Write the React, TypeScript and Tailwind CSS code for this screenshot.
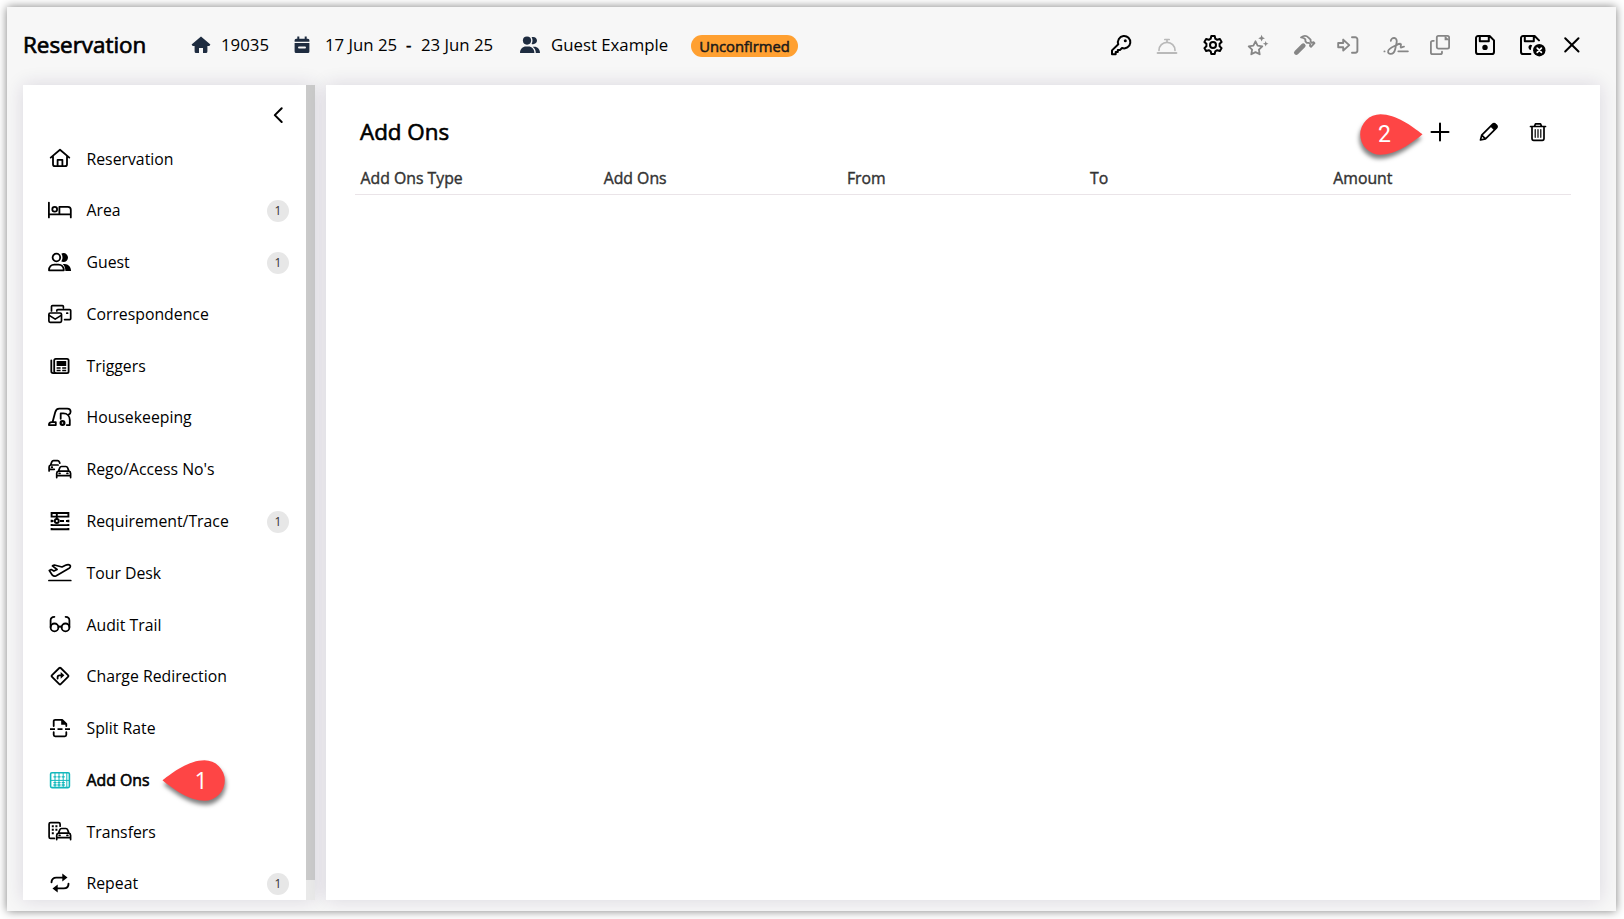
import type { ReactNode } from 'react'

interface IconProps {
  children: ReactNode
  className?: string
  w?: number
  sw?: number
}

function Icon({ children, className = '', w = 24, sw = 1.8 }: IconProps) {
  return (
    <svg
      width={w}
      height={24}
      viewBox={`0 0 ${w} 24`}
      fill="none"
      stroke="currentColor"
      strokeWidth={sw}
      strokeLinecap="round"
      strokeLinejoin="round"
      className={`shrink-0 ${className}`}
    >
      {children}
    </svg>
  )
}

const solid = { fill: 'currentColor', stroke: 'none' }

// Front view of a car, shared by the Rego and Transfers icons
const car = (
  <>
    <path d="M8.7 20.6v-4.2c0-1.2.7-2 1.8-2.3l1.3-3.4c.3-.8.9-1.2 1.7-1.2h4.4c.8 0 1.4.4 1.7 1.2l1.3 3.4c1.1.3 1.7 1.1 1.7 2.3v4.2M8.7 18.7h13.9M10.5 14.1h10.4" />
    <path d="M11.2 16.4h.8M19 16.4h.8" />
  </>
)

interface NavItem {
  label: string
  icon: ReactNode
  count?: number
  active?: boolean
}

const navItems: NavItem[] = [
  {
    label: 'Reservation',
    icon: (
      <Icon>
        <path d="M2.7 11.6 12 3.8l9.3 7.8M5 10v8.2a2 2 0 0 0 2 2h10a2 2 0 0 0 2-2V10" />
        <path d="M9.6 20v-6.2h4.8V20" />
      </Icon>
    ),
  },
  {
    label: 'Area',
    count: 1,
    icon: (
      <Icon>
        <path d="M.9 4.6v14.8M.9 16.4h21.9M22.8 19.4v-7.6a3 3 0 0 0-3-3h-8.4v7.6" />
        <circle cx="6.7" cy="11.2" r="2.4" />
      </Icon>
    ),
  },
  {
    label: 'Guest',
    count: 1,
    icon: (
      <Icon>
        <circle cx="8.4" cy="7.5" r="3.8" />
        <path d="M1 20.3c0-3.4 2.3-5.6 5.3-5.6h4.2c3 0 5.3 2.2 5.3 5.6z" />
        <path {...solid} d="M13.2 11.3c.9-1 1.3-2.3 1.3-3.8 0-1.4-.4-2.7-1.2-3.7.7-.5 1.5-.7 2.2-.7a4.500 4.500 0 0 1 0 9c-.9 0-1.700-.3-2.300-.8zM14.600 13.900h2.100c3.600 0 6.400 2.900 6.400 7.200h-5.700c0-3.300-.9-5.700-2.800-7.200z" />
      </Icon>
    ),
  },
  {
    label: 'Correspondence',
    icon: (
      <Icon sw={1.7}>
        <path d="M3.5 8.9V4.6c0-.6.4-1 1-1h9.9c.6 0 1 .4 1 1v1.2M8.800 8.900v-.3c0-.6.4-1 1-1h11.900c.6 0 1 .4 1 1v8c0 .6-.4 1-1 1h-5.100" />
        <rect x=".9" y="11" width="12.6" height="9.4" rx="1.3" />
        <path d="m1.2 13.4 6 3.7 6-3.7M18.800 11.200h.8" />
      </Icon>
    ),
  },
  {
    label: 'Triggers',
    icon: (
      <Icon>
        <rect x="6.2" y="4.9" width="14.4" height="14.2" rx="1.6" />
        <path d="M3.3 6.300v11c0 1.100.7 1.800 1.800 1.800h2.500" />
        <rect {...solid} x="8.6" y="7" width="9.6" height="5" />
        <path strokeWidth={1.5} strokeLinecap="butt" d="M8.600 13.900h4M14.200 13.900h4M8.600 16.500h4M14.200 16.500h4" />
      </Icon>
    ),
  },
  {
    label: 'Housekeeping',
    icon: (
      <Icon>
        <path d="M.9 20.100c0-1.700 1.200-2.900 2.900-2.900h4v2.900zM4.600 17l2.600-9.800c.6-2.300 1.700-3.600 4-3.600h8.100c2 0 3.300 1.300 3.300 3.100 0 1.400-.7 2.300-1.900 2.900" />
        <path d="M12.700 13.800V8.300h2.700c3.800 0 6.400 2.900 6.400 6.800v5h-3" />
        <circle cx="14.5" cy="18" r="1.9" strokeWidth={2.2} />
      </Icon>
    ),
  },
  {
    label: "Rego/Access No's",
    icon: (
      <Icon sw={1.7}>
        {car}
        <path d="M1.100 14v-3.900c0-1.100.5-1.800 1.500-2.100l1.200-3.100c.3-.8.9-1.200 1.700-1.200h4.100c.8 0 1.400.4 1.700 1.100l.5 1.300M2.600 8h7.500M1.100 12.300h5.200M3.600 10.200h.7" />
      </Icon>
    ),
  },
  {
    label: 'Requirement/Trace',
    count: 1,
    icon: (
      <Icon sw={1.9}>
        <g strokeLinecap="butt">
          <path d="M2.800 4h18.400M2.800 7.600h18.400M3.600 3v5.500M20.400 3v5.500" />
          <path d="M2.800 12h2.700M12 12h4M18 12h3.200M3.600 10.800v2.400M20.400 10.800v2.400M2.800 16.100h18.400M2.800 20.200h18.400M3.600 15v2M20.400 15v2M3.600 19v2.200M20.400 19v2.200" />
        </g>
        <circle cx="8.8" cy="12" r="2" />
        <path d="M8.800 5v5" />
      </Icon>
    ),
  },
  {
    label: 'Tour Desk',
    icon: (
      <Icon sw={1.7}>
        <path d="M.9 19.500h21.900" />
        <path d="m1.300 9.500 1.900-.9 2.700 1.500 3.200-1.600-4.700-3.600 2-.9 7.600 2 3.500-1.700c1.400-.7 3.500-1 4.600.1 1 1.100-.3 2.500-1.800 3.300L8.300 14.700c-1.400.7-2.700.7-3.900-.5z" />
      </Icon>
    ),
  },
  {
    label: 'Audit Trail',
    icon: (
      <Icon>
        <circle cx="6.5" cy="15.4" r="3.9" />
        <circle cx="17.5" cy="15.4" r="3.9" />
        <path d="M10.400 15.100c1-.8 2.200-.8 3.200 0M2.600 15V8.500c0-2.200 1.300-3.700 3.800-3.700M21.400 15V8.500c0-2.200-1.300-3.700-3.800-3.700" />
      </Icon>
    ),
  },
  {
    label: 'Charge Redirection',
    icon: (
      <Icon>
        <path d="m11.300 4-7.500 7.300a1 1 0 0 0 0 1.400l7.500 7.400a1 1 0 0 0 1.400 0l7.500-7.400a1 1 0 0 0 0-1.400L12.700 4a1 1 0 0 0-1.400 0z" />
        <path d="M9.600 14.600v-1.400c0-1.200.7-1.900 1.900-1.900h2.400" />
        <path {...solid} d="M12.700 7.900 16.400 11.300 12.700 14.700z" />
      </Icon>
    ),
  },
  {
    label: 'Split Rate',
    icon: (
      <Icon>
        <path d="M5.700 10V5.300c0-.9.6-1.500 1.500-1.500h7l4.100 4V10M5.700 16.200v2.600c0 .9.6 1.500 1.500 1.500h9.600c.9 0 1.500-.6 1.500-1.500v-2.600" />
        <path {...solid} d="M13.200 3.500v5.200h5.300z" />
        <path strokeLinecap="butt" d="M2 13.100h5M9.500 13.100h5M17 13.100h5" />
      </Icon>
    ),
  },
  {
    label: 'Add Ons',
    active: true,
    icon: (
      <Icon sw={1.6} className="text-[#12b8bc]">
        <rect x="2.6" y="4.7" width="18.8" height="14.9" rx="1.3" />
        <path strokeWidth={1} d="M7 5v14.300M11 5v14.300M15.200 5v14.300M18.800 5v14.300M3 12.400h18" />
        <path strokeWidth={1.3} d="M5.900 8.800h2.200M9.900 8.800h2.200M14.100 8.800h2.200M5.900 14.600h2.200M9.900 14.600h2.200M9.900 17h2.200M14.100 14.600h2.200M14.100 17h2.200M5.900 17h2.200" />
      </Icon>
    ),
  },
  {
    label: 'Transfers',
    icon: (
      <Icon sw={1.7}>
        {car}
        <path d="M6.400 19.400H2.600c-1 0-1.500-.5-1.500-1.500V5.100c0-1 .5-1.500 1.500-1.500h8c1 0 1.500.5 1.500 1.500v2.100" />
        <path strokeWidth={2} strokeLinecap="butt" d="M3.800 7.200h2M7.400 7.200h2M3.800 10.700h2M7.400 10.700h2M3.800 14.200h2" />
      </Icon>
    ),
  },
  {
    label: 'Repeat',
    count: 1,
    icon: (
      <Icon sw={1.9}>
        <path d="M3.500 11.300C3.500 8.300 5.500 6.600 8.300 6.600h7.500M20.500 12.700c0 3-2 4.700-4.800 4.700H8.200" />
        <path {...solid} d="M14.300 2.600 19.500 6.600 14.300 10.600zM9.700 13.400 4.500 17.400 9.700 21.400z" />
      </Icon>
    ),
  },
]

function Toolbar() {
  return (
    <div className="flex items-center text-black">
      <Icon sw={2}>
        <path d="M9.300 11.300A6.200 6.200 0 1 1 13 15l-2.100 2.100H8.800v2H6.700v2.200H3v-3.900z" />
        <circle {...solid} cx="16.3" cy="7.8" r="1.5" />
      </Icon>
      <Icon className="ml-[22px] text-[#b9b9b9]" sw={1.7}>
        <path d="M4 17.300a8 8 0 0 1 16 0M12 9V6.700M9.800 6.500h4.400" />
        <path strokeWidth={2} d="M2.600 20h18.800" />
      </Icon>
      <Icon className="ml-[22px]" sw={2}>
        <circle cx="12" cy="12" r="3" />
        <path d="M10.300 3h3.400l.6 2.700 1.900 1.100 2.700-.8 1.700 2.900-2 1.900v2.400l2 1.900-1.700 2.900-2.700-.8-1.900 1.100-.6 2.700h-3.400l-.6-2.700-1.900-1.100-2.700.8-1.700-2.900 2-1.900v-2.400l-2-1.900 1.700-2.900 2.700.8 1.900-1.100z" />
      </Icon>
      <Icon className="ml-[21px] text-[#868686]">
        <path d="m9.500 8.300 2.100 4.300 4.700.7-3.400 3.300.8 4.700-4.200-2.200-4.200 2.200.8-4.700-3.400-3.300 4.700-.7z" />
        <path {...solid} d="m15.600 1.800 1 2.400 2.400 1-2.400 1-1 2.400-1-2.400-2.400-1 2.400-1zM19.700 8l.8 2 2 .8-2 .8-.8 2-.8-2-2-.8 2-.8z" />
      </Icon>
      <Icon className="ml-[22px] text-[#868686]">
        <path d="M9 4.400c2.700-1.900 5.600-1.700 7.500.2l2.100 2.100v2l1.200 1.200 1.700-.7 1 1-3.500 3.600-1.100-1 .5-1.500-1.500-1.400h-2l-1.500-1.600V6.400c-1-1.200-2.600-1.800-4.400-2z" />
        <path strokeWidth={4.6} d="m11.300 12.600-7 7" />
      </Icon>
      <Icon className="ml-[20px] text-[#868686]" sw={1.9}>
        <path d="M2.200 10v4.200h5v3.400l6-5.500-6-5.500V10zM16 4.200h3.200a2.200 2.200 0 0 1 2.200 2.200v11.200a2.200 2.200 0 0 1-2.200 2.200H16" />
      </Icon>
      <Icon w={28} className="ml-[22px] text-[#868686]">
        <path d="M8.800 7.800c.2-1.900 1.800-3 3.600-2.800 2 .3 2.700 2.200 2.200 4.800l-1.500 6.700c-.7 2.900-2.500 4.400-4.600 4.300-1.700 0-2.700-1.100-2.400-2.600.4-2.400 3.500-3.700 7.500-5.700 1.800-.9 3.600-2 4.900-1.700 1.300.2-.5 3 .3 3.600.7.500 2-.8 3.200-.7" />
        <path d="M16.300 18.300h9.600M2.400 18.400h.2" />
      </Icon>
      <Icon className="ml-[18px] text-[#868686]">
        <rect x="8.8" y="2.9" width="12.3" height="12.8" rx="1.6" />
        <path d="M5.800 7.800H4.600A1.700 1.700 0 0 0 2.900 9.500v10a1.700 1.700 0 0 0 1.700 1.700h7.700a1.700 1.700 0 0 0 1.700-1.700v-.8" />
        <path {...solid} d="M16.600 2.500v4.800h5z" />
      </Icon>
      <Icon className="ml-[21px]" sw={2}>
        <path d="M3 5.100A2.100 2.100 0 0 1 5.100 3h11.500L21 7.400v11.500a2.100 2.100 0 0 1-2.100 2.100H5.100A2.100 2.100 0 0 1 3 18.900zM6.800 3.200v5.100h9V3.200" />
        <circle {...solid} cx="12" cy="14.4" r="2.7" />
      </Icon>
      <Icon w={28} className="ml-[22px]" sw={2}>
        <path d="M11.400 21H4.100A2.100 2.100 0 0 1 2 18.900V5.100A2.100 2.100 0 0 1 4.100 3h11.500L20 7.400M5.800 3.200v5.100h9V3.200" />
        <path {...solid} d="M11.100 11.700c.9 0 1.600.3 2.100.8-.8 1.200-1.300 2.700-1.200 4.400a2.700 2.700 0 0 1-.9-5.200z" />
        <circle {...solid} cx="20.3" cy="17.2" r="6.2" />
        <path className="stroke-white" strokeWidth={1.7} d="m18.200 15.100 4.200 4.200M22.400 15.100l-4.200 4.200" />
      </Icon>
      <Icon className="ml-[13px]" sw={2}>
        <path d="m5.200 5.200 13.300 13.300M18.500 5.200 5.200 18.500" />
      </Icon>
    </div>
  )
}

function Header() {
  return (
    <header className="flex h-[78px] items-center pb-[3px] pl-4 pr-[32px]">
      <h1 className="mt-px w-[166px] text-[22.4px] leading-[32px] [-webkit-text-stroke:0.7px_black]">Reservation</h1>
      <div className="flex flex-1 items-center text-[16.8px] text-black">
        <Icon className="text-[#1e2c40]">
          <path {...solid} d="M12 3.500 21.400 11.500 20.300 13H18.400v5.500a1.500 1.500 0 0 1-1.500 1.500H14v-5h-4v5H7.100a1.500 1.500 0 0 1-1.500-1.500V13H3.700L2.600 11.500z" />
        </Icon>
        <span className="ml-[8px] w-[69px]">19035</span>
        <Icon className="mr-[11px] text-[#1e2c40]">
          <path {...solid} d="M7.300 3.500h2V5.800h5.400V3.500h2v2.300h1.200a1.500 1.500 0 0 1 1.500 1.500v1.400H4.600V7.300a1.500 1.500 0 0 1 1.500-1.500h1.200zM4.600 10h14.800v8.500a1.500 1.500 0 0 1-1.500 1.500H6.100a1.500 1.500 0 0 1-1.500-1.500z" />
          <path strokeWidth={2} className="stroke-[#f7f7f7]" d="M9 14.600h6" />
        </Icon>
        <span className="w-[81px]">17 Jun 25</span>
        <span className="w-[15px] [-webkit-text-stroke:0.4px_black]">-</span>
        <span className="w-[97px]">23 Jun 25</span>
        <Icon className="mr-[9px] text-[#1e2c40]">
          <circle {...solid} cx="9" cy="7.6" r="4.1" />
          <path {...solid} d="M2 20c0-3.700 2.700-6.400 6-6.400h2.400c3.300 0 6 2.700 6 6.400zM13.600 10.900c.6-1 .9-2.100.9-3.300 0-1.200-.3-2.300-.9-3.300 2.900-1 5.400.8 5.400 3.300s-2.500 4.300-5.400 3.300zM14.700 13.700h1.600c3.300 0 5.700 2.600 5.700 6.300h-4.200c0-2.700-1.200-5-3.100-6.300z" />
        </Icon>
        <span className="w-[140px]">Guest Example</span>
        <span className="mt-[2px] flex h-[22px] w-[107px] items-center justify-center rounded-full bg-[#ffa031] pt-px text-[14.8px] text-[#1a1a1a] [-webkit-text-stroke:0.5px_#1a1a1a]">
          Unconfirmed
        </span>
      </div>
      <Toolbar />
    </header>
  )
}

function Sidebar() {
  return (
    <aside className="flex w-[292px] shrink-0 bg-white shadow-[0_0_18px_rgba(40,20,80,0.14)]">
      <div className="h-[815px] w-[283px] overflow-hidden">
        <div className="flex h-[47.6px] items-end justify-end pb-[6px] pr-[16px]">
          <Icon sw={2}>
            <path d="m15.700 5.200-6.900 6.900 6.900 6.900" />
          </Icon>
        </div>
        <ul>
          {navItems.map((item) => (
            <li key={item.label} className="flex h-[51.78px] items-center pl-[25px] pr-[17px] text-[15.8px] text-black">
              {item.icon}
              <span className={`ml-[14.5px] flex-1 pt-[2px] ${item.active ? '[-webkit-text-stroke:0.6px_black]' : ''}`}>
                {item.label}
              </span>
              {item.count && (
                <span className="mt-[1.5px] flex size-[22px] items-center justify-center rounded-full bg-[#e7e7e7] text-xs text-[#333]">
                  {item.count}
                </span>
              )}
            </li>
          ))}
        </ul>
      </div>
      <div className="w-[9px] bg-[#e9e9e9]">
        <div className="h-[795px] bg-[#cacaca]" />
      </div>
    </aside>
  )
}

const columns = ['Add Ons Type', 'Add Ons', 'From', 'To', 'Amount']

function AddOnsPanel() {
  return (
    <main className="flex-1 bg-white pl-[29px] pr-[29px] pt-[31px] shadow-[0_0_18px_rgba(40,20,80,0.14)]">
      <div className="flex h-[32px] items-center pl-[5px] pr-[21px]">
        <h2 className="flex-1 text-[22.4px] leading-[32px] [-webkit-text-stroke:0.6px_black]">Add Ons</h2>
        <Icon sw={2} className="-mt-px">
          <path d="M12 3.500v17M3.500 12h17" />
        </Icon>
        <Icon className="ml-[25px]" sw={1.7}>
          <path d="m3.500 20 1.200-4.900L15.500 4.300c.9-.9 2.200-.9 3 0l.8.8c.9.900.9 2.100 0 3L8.500 18.800zM4.700 15.100 8.500 18.800" />
          <path {...solid} d="m13.300 6.500 2.200-2.200c.9-.9 2.200-.9 3 0l.8.8c.9.900.9 2.100 0 3l-2.200 2.200z" />
        </Icon>
        <Icon className="ml-[25px]" sw={1.7}>
          <path d="M4.500 6.500h15M8.400 6.300l1.100-2.500h5l1.100 2.500M6 6.700v11.900c0 1.100.6 1.700 1.700 1.700h8.600c1.100 0 1.700-.6 1.700-1.700V6.700" />
          <path strokeWidth={1.2} d="M9.200 9.500v7.800M12 9.500v7.800M14.800 9.500v7.800" />
        </Icon>
      </div>
      <div className="grid grid-cols-5 border-b border-[#eae4e8] pb-[4px] pt-[18px] text-[15.8px] leading-[24px] text-[#333] [-webkit-text-stroke:0.4px_#333]">
        {columns.map((col) => (
          <div key={col} className="pl-[5.5px]">
            {col}
          </div>
        ))}
      </div>
    </main>
  )
}

function Callout({ step, flip, className }: { step: number; flip?: boolean; className: string }) {
  return (
    <div className={`absolute h-[41px] w-[63px] ${className}`}>
      <svg
        width="63"
        height="41"
        viewBox="0 0 63 41"
        className={`overflow-visible drop-shadow-[1px_4px_2px_rgba(0,0,0,0.5)] ${flip ? '-scale-x-100' : ''}`}
      >
        <path
          fill="#fe4545"
          d="M.5 20.300C11 12 27 .2 42.500.2a20.300 20.300 0 0 1 0 40.600C27 40.800 11 29 .5 20.300z"
        />
      </svg>
      <span
        className={`absolute inset-y-0 flex w-[40px] items-center justify-center text-[23px] leading-none text-white ${flip ? "left-[4.5px] font-['Roboto',sans-serif]" : 'right-[4px]'}`}
      >
        {step}
      </span>
    </div>
  )
}

export default function App() {
  return (
    <div className="relative h-[919px] w-[1624px] overflow-hidden bg-white p-[7px] font-['Open_Sans',sans-serif]">
      <div className="h-[904px] w-[1609px] overflow-hidden bg-[#f7f7f7] shadow-[0_0_9px_rgba(0,0,0,0.5)]">
        <Header />
        <div className="flex h-[815px] gap-[11px] px-4">
          <Sidebar />
          <AddOnsPanel />
        </div>
      </div>
      <Callout step={1} className="left-[162px] top-[760px]" />
      <Callout step={2} flip className="left-[1360px] top-[114px]" />
    </div>
  )
}
